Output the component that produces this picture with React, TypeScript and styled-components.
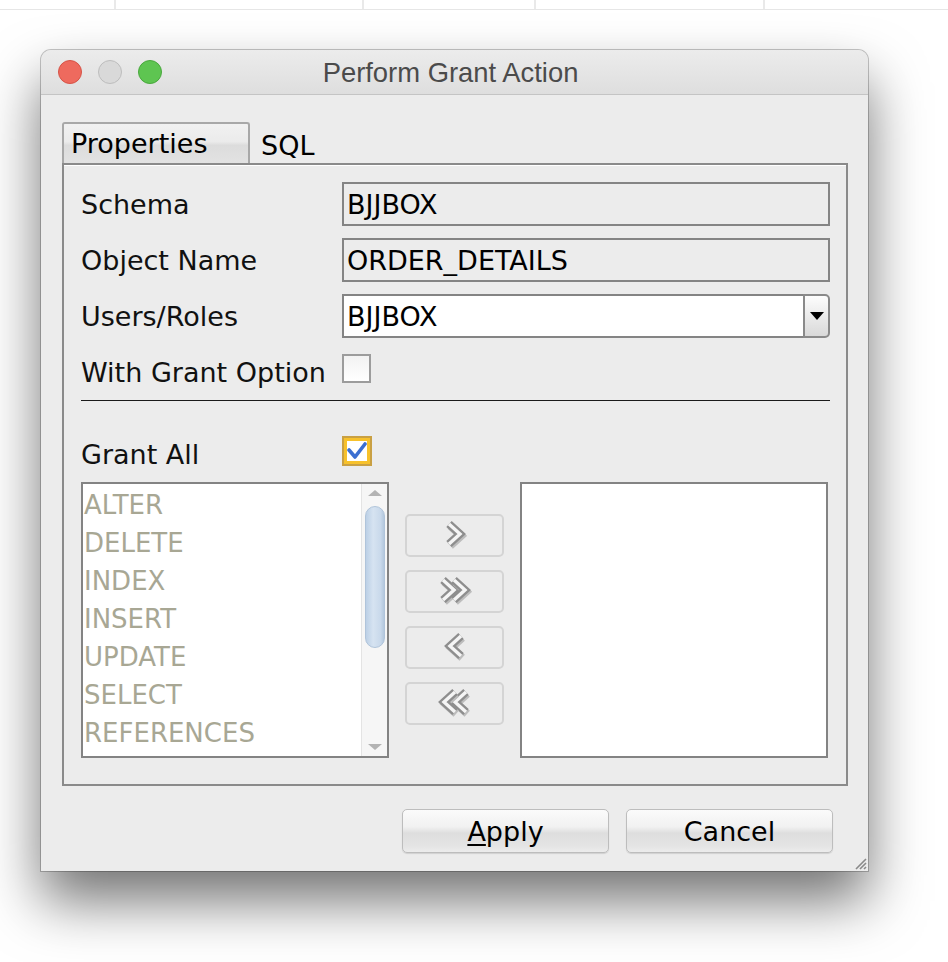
import React from "react";
import styled, { createGlobalStyle } from "styled-components";

const Global = createGlobalStyle`
  html, body { margin: 0; padding: 0; background: #fff; }
  body { font-family: "DejaVu Sans", "Liberation Sans", sans-serif; }
  * { box-sizing: border-box; }
`;

const Page = styled.div`
  width: 948px;
  height: 962px;
  overflow: hidden;
  background: #fff;
`;

const TopStrip = styled.div`
  display: grid;
  grid-template-columns: 116px 248px 172px 229px 1fr;
  height: 10px;
  border-bottom: 1px solid #e6e6e6;
`;

const StripCell = styled.div`
  border-right: 2px solid #e9e9e9;
`;

const Window = styled.div`
  position: relative;
  margin: 40px 0 0 41px;
  width: 827px;
  height: 821px;
  background: #ececec;
  border-radius: 10px 10px 0 0;
  box-shadow: 0 30px 56px rgba(0, 0, 0, 0.55), 0 0 0 1px rgba(0, 0, 0, 0.22);
  display: flex;
  flex-direction: column;
`;

const TitleBar = styled.div`
  height: 45px;
  display: grid;
  grid-template-columns: 1fr auto 1fr;
  align-items: center;
  padding: 0 17px;
  border-radius: 10px 10px 0 0;
  background: linear-gradient(#ececec, #dedede);
  border-bottom: 1px solid #c4c4c4;
`;

const Lights = styled.div`
  display: flex;
  gap: 16px;
  align-items: center;
`;

const Light = styled.span<{ $c: string; $b: string }>`
  width: 24px;
  height: 24px;
  border-radius: 50%;
  background: ${(p) => p.$c};
  border: 1px solid ${(p) => p.$b};
`;

const Title = styled.div`
  font-family: "Liberation Sans", Arial, sans-serif;
  font-size: 27.4px;
  color: #4b4b4b;
  padding-top: 1px;
  margin-right: 8px;
`;

const Body = styled.div`
  flex: 1;
  display: flex;
  flex-direction: column;
  padding: 27px 20px 0 21px;
`;

const TabRow = styled.div`
  display: flex;
  align-items: stretch;
  height: 41px;
`;

const Tab = styled.div<{ $active?: boolean }>`
  display: flex;
  align-items: center;
  font-size: 27px;
  color: #000;
  ${(p) =>
    p.$active
      ? `
    width: 188px;
    padding-left: 7px;
    border: 2px solid #a8a8a8;
    border-bottom: none;
    border-radius: 3px 3px 0 0;
    background: linear-gradient(#f1f1f1 0%, #ebebeb 45%, #dcdcdc 55%, #e2e2e2 100%);
  `
      : `
    padding-left: 11px;
    padding-top: 6px;
  `}
`;

const Panel = styled.div`
  height: 623px;
  border: 2px solid #8a8a8a;
  box-shadow: inset 0 1px 0 #fff;
  padding: 17px 16px 26px 17px;
  display: flex;
  flex-direction: column;
`;

const Form = styled.div`
  display: grid;
  grid-template-columns: 261px 1fr;
  grid-auto-rows: 44px;
  row-gap: 12px;
  align-items: center;
`;

const Label = styled.div<{ $shift?: number }>`
  font-size: 27px;
  color: #111;
  position: relative;
  top: ${(p) => p.$shift ?? 0}px;
`;

const Field = styled.div<{ $white?: boolean }>`
  height: 44px;
  border: 2px solid #848484;
  background: ${(p) => (p.$white ? "#fff" : "#ececec")};
  font-size: 27px;
  color: #000;
  display: flex;
  align-items: center;
  padding-left: 3px;
  padding-top: 1px;
`;

const Combo = styled.div`
  display: flex;
  height: 44px;
`;

const ComboText = styled(Field)`
  flex: 1;
  border-right: none;
`;

const ComboButton = styled.div`
  width: 27px;
  height: 44px;
  border: 2px solid #8a8a8a;
  border-radius: 0 5px 5px 0;
  background: linear-gradient(#fdfdfd, #e9e9e9 55%, #d9d9d9);
  display: flex;
  align-items: center;
  justify-content: center;
`;

const Check = styled.div`
  width: 29px;
  height: 29px;
  border: 2px solid #9c9c9c;
  background: linear-gradient(#f2f2f2, #ffffff);
  margin-top: -7px;
`;

const CheckOn = styled.div`
  width: 30px;
  height: 30px;
  border: 2px solid #c9a043;
  background: #fff;
  box-shadow: inset 0 0 0 3px #f7c12b;
  display: flex;
  align-items: center;
  justify-content: center;
  margin-top: -1px;
`;

const Separator = styled.div`
  height: 1px;
  background: #1a1a1a;
  margin-top: 6px;
`;

const GrantRow = styled.div`
  display: grid;
  grid-template-columns: 261px 1fr;
  height: 42px;
  margin-top: 29px;
  align-items: center;
`;

const Lists = styled.div`
  margin-top: 10px;
  height: 276px;
  display: grid;
  grid-template-columns: 308px 99px 308px;
  column-gap: 16px;
`;

const ListBox = styled.div`
  border: 2px solid #838383;
  background: #fff;
  display: flex;
`;

const Items = styled.div`
  flex: 1;
  padding-top: 2px;
`;

const Item = styled.div`
  height: 38px;
  line-height: 38px;
  padding-left: 1px;
  font-size: 26px;
  color: #a8a794;
`;

const ScrollBar = styled.div`
  width: 26px;
  background: #f6f6f6;
  border-left: 1px solid #e4e4e4;
  display: flex;
  flex-direction: column;
  align-items: center;
  padding: 6px 0 6px;
`;

const ScrollArrow = styled.div<{ $down?: boolean }>`
  width: 0;
  height: 0;
  border-left: 7px solid transparent;
  border-right: 7px solid transparent;
  ${(p) =>
    p.$down
      ? "border-top: 6px solid #b3b3b3; margin-top: auto;"
      : "border-bottom: 6px solid #b3b3b3;"}
`;

const Thumb = styled.div`
  width: 20px;
  height: 142px;
  margin-top: 10px;
  border-radius: 10px;
  border: 1px solid #b0c4da;
  background: linear-gradient(90deg, #bcd0e6, #d6e3f1 40%, #c9d9eb 80%, #b4c8de);
`;

const MoveCol = styled.div`
  display: flex;
  flex-direction: column;
  gap: 13px;
  padding-top: 32px;
`;

const MoveBtn = styled.div`
  height: 43px;
  border: 2px solid #d4d4d4;
  border-radius: 5px;
  background: #ececec;
  display: flex;
  align-items: center;
  justify-content: center;
`;

const Footer = styled.div`
  display: flex;
  justify-content: flex-end;
  gap: 17px;
  padding: 23px 15px 0 0;
`;

const PushButton = styled.div`
  width: 207px;
  height: 44px;
  border: 1px solid #bdbdbd;
  border-radius: 5px;
  background: linear-gradient(#fbfbfb 0%, #f1f1f1 40%, #dedede 55%, #e4e4e4 85%, #ececec 100%);
  box-shadow: 0 1px 1px rgba(0, 0, 0, 0.12);
  font-size: 27px;
  color: #000;
  display: flex;
  align-items: center;
  justify-content: center;
  padding-top: 1px;
`;

const Mnemonic = styled.span`
  text-decoration: underline;
  text-underline-offset: 3px;
  text-decoration-thickness: 2px;
`;

const Grip = styled.svg`
  position: absolute;
  right: 1px;
  bottom: 1px;
`;

const Chevrons: React.FC<{ dir: "r" | "l"; n: 1 | 2 }> = ({ dir, n }) => {
  const w = n === 1 ? 24 : 36;
  const offs = n === 1 ? [3] : [3, 14];
  const one = (x: number, key: number) => {
    const d =
      dir === "r"
        ? `M${x + 3} 3 L${x + 14} 13 L${x + 3} 23`
        : `M${x + 15} 3 L${x + 4} 13 L${x + 15} 23`;
    return (
      <g key={key}>
        <path d={d} transform="translate(1.2,1.8)" fill="none" stroke="#bdbdbd" strokeWidth="8" strokeLinejoin="miter" />
        <path d={d} fill="none" stroke="#8e8e8e" strokeWidth="8" strokeLinejoin="miter" />
        <path d={d} fill="none" stroke="#f5f5f5" strokeWidth="3.4" strokeLinejoin="miter" />
      </g>
    );
  };
  return (
    <svg width={w} height={29} viewBox={`0 0 ${w} 29`}>
      {(dir === "l" ? [...offs].reverse() : offs).map((x, i) => one(x, i))}
    </svg>
  );
};

const privileges = ["ALTER", "DELETE", "INDEX", "INSERT", "UPDATE", "SELECT", "REFERENCES"];

export default function App() {
  return (
    <Page>
      <Global />
      <TopStrip>
        <StripCell />
        <StripCell />
        <StripCell />
        <StripCell />
        <div />
      </TopStrip>
      <Window>
        <TitleBar>
          <Lights>
            <Light $c="#ee6a5e" $b="#d65347" />
            <Light $c="#d9d9d9" $b="#bdbdbd" />
            <Light $c="#5ec551" $b="#49a83d" />
          </Lights>
          <Title>Perform Grant Action</Title>
          <div />
        </TitleBar>
        <Body>
          <TabRow>
            <Tab $active>Properties</Tab>
            <Tab>SQL</Tab>
          </TabRow>
          <Panel>
            <Form>
              <Label>Schema</Label>
              <Field>BJJBOX</Field>
              <Label>Object Name</Label>
              <Field>ORDER_DETAILS</Field>
              <Label>Users/Roles</Label>
              <Combo>
                <ComboText $white>BJJBOX</ComboText>
                <ComboButton>
                  <svg width="14" height="8" viewBox="0 0 14 8">
                    <path d="M0 0 H14 L7 8 Z" fill="#000" />
                  </svg>
                </ComboButton>
              </Combo>
              <Label>With Grant Option</Label>
              <Check />
            </Form>
            <Separator />
            <GrantRow>
              <Label $shift={3}>Grant All</Label>
              <CheckOn>
                <svg width="20" height="18" viewBox="0 0 20 18">
                  <path d="M2 8 L8 15 L18 2" fill="none" stroke="#3b6fd1" strokeWidth="3.6" strokeLinecap="round" strokeLinejoin="round" />
                </svg>
              </CheckOn>
            </GrantRow>
            <Lists>
              <ListBox>
                <Items>
                  {privileges.map((p) => (
                    <Item key={p}>{p}</Item>
                  ))}
                </Items>
                <ScrollBar>
                  <ScrollArrow />
                  <Thumb />
                  <ScrollArrow $down />
                </ScrollBar>
              </ListBox>
              <MoveCol>
                <MoveBtn>
                  <Chevrons dir="r" n={1} />
                </MoveBtn>
                <MoveBtn>
                  <Chevrons dir="r" n={2} />
                </MoveBtn>
                <MoveBtn>
                  <Chevrons dir="l" n={1} />
                </MoveBtn>
                <MoveBtn>
                  <Chevrons dir="l" n={2} />
                </MoveBtn>
              </MoveCol>
              <ListBox />
            </Lists>
          </Panel>
          <Footer>
            <PushButton>
              <span>
                <Mnemonic>A</Mnemonic>pply
              </span>
            </PushButton>
            <PushButton>Cancel</PushButton>
          </Footer>
        </Body>
        <Grip width="14" height="14" viewBox="0 0 14 14">
          <path d="M13 3 L3 13 M13 7 L7 13 M13 11 L11 13" stroke="#8a8a8a" strokeWidth="1.6" />
        </Grip>
      </Window>
    </Page>
  );
}
